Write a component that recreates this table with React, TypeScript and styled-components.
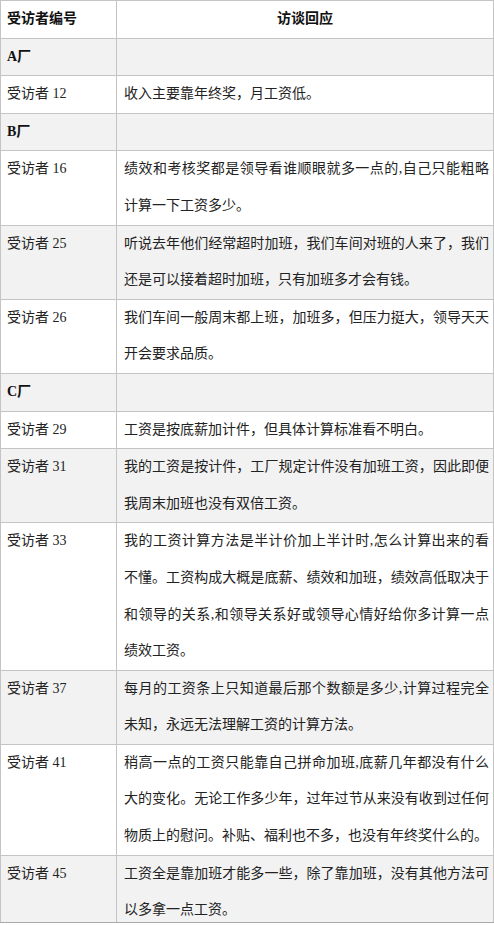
import styled, { createGlobalStyle } from "styled-components"

const GlobalStyle = createGlobalStyle`
    html, body {
        margin: 0;
        padding: 0;
        background: #fff;
    }
    body {
        font-family: "Liberation Serif", "Noto Sans CJK SC", serif;
        color: #222;
    }
`

const Frame = styled.div`
    width: 494px;
    height: 922px;
    overflow: hidden;
    border-bottom: 1px solid #a8a8a8;
`

const Table = styled.table`
    width: 494px;
    table-layout: fixed;
    border-collapse: separate;
    border-spacing: 0;
    border-top: 1px solid #c4c4c4;
    border-left: 1px solid #c4c4c4;
    font-size: 14px;
    line-height: 36.6px;

    tbody tr:nth-child(odd) td {
        background-color: #f2f2f2;
    }
`

const HeadCell = styled.th<{ $center?: boolean }>`
    padding: 0 4px 0 ${(p) => (p.$center ? "4px" : "6px")};
    text-align: ${(p) => (p.$center ? "center" : "left")};
    font-weight: 700;
    color: #111;
    border-right: 1px solid #c4c4c4;
    border-bottom: 1px solid #c4c4c4;
    background: #fff;
`

const IdCell = styled.td<{ $bold?: boolean }>`
    width: 109px;
    padding: 0 0 0 6px;
    vertical-align: top;
    font-weight: ${(p) => (p.$bold ? 700 : 400)};
    color: ${(p) => (p.$bold ? "#111" : "#222")};
    border-right: 1px solid #c4c4c4;
    border-bottom: 1px solid #c4c4c4;
    white-space: nowrap;
`

const AnswerCell = styled.td`
    padding: 0 4px 0 7px;
    vertical-align: top;
    text-align: justify;
    word-break: break-all;
    border-right: 1px solid #c4c4c4;
    border-bottom: 1px solid #c4c4c4;
`

type Row = { id: string; text?: string; group?: boolean }

const rows: Row[] = [
    { id: "A厂", group: true },
    { id: "受访者 12", text: "收入主要靠年终奖，月工资低。" },
    { id: "B厂", group: true },
    { id: "受访者 16", text: "绩效和考核奖都是领导看谁顺眼就多一点的,自己只能粗略计算一下工资多少。" },
    { id: "受访者 25", text: "听说去年他们经常超时加班，我们车间对班的人来了，我们还是可以接着超时加班，只有加班多才会有钱。" },
    { id: "受访者 26", text: "我们车间一般周末都上班，加班多，但压力挺大，领导天天开会要求品质。" },
    { id: "C厂", group: true },
    { id: "受访者 29", text: "工资是按底薪加计件，但具体计算标准看不明白。" },
    { id: "受访者 31", text: "我的工资是按计件，工厂规定计件没有加班工资，因此即便我周末加班也没有双倍工资。" },
    { id: "受访者 33", text: "我的工资计算方法是半计价加上半计时,怎么计算出来的看不懂。工资构成大概是底薪、绩效和加班，绩效高低取决于和领导的关系,和领导关系好或领导心情好给你多计算一点绩效工资。" },
    { id: "受访者 37", text: "每月的工资条上只知道最后那个数额是多少,计算过程完全未知，永远无法理解工资的计算方法。" },
    { id: "受访者 41", text: "稍高一点的工资只能靠自己拼命加班,底薪几年都没有什么大的变化。无论工作多少年，过年过节从来没有收到过任何物质上的慰问。补贴、福利也不多，也没有年终奖什么的。" },
    { id: "受访者 45", text: "工资全是靠加班才能多一些，除了靠加班，没有其他方法可以多拿一点工资。" },
]

export default function App() {
    return (
        <>
            <GlobalStyle />
            <Frame>
                <Table>
                    <colgroup>
                        <col style={{ width: 116 }} />
                        <col />
                    </colgroup>
                    <thead>
                        <tr>
                            <HeadCell>受访者编号</HeadCell>
                            <HeadCell $center>访谈回应</HeadCell>
                        </tr>
                    </thead>
                    <tbody>
                        {rows.map((r) => (
                            <tr key={r.id}>
                                <IdCell $bold={r.group}>{r.id}</IdCell>
                                <AnswerCell>{r.text}</AnswerCell>
                            </tr>
                        ))}
                    </tbody>
                </Table>
            </Frame>
        </>
    )
}
